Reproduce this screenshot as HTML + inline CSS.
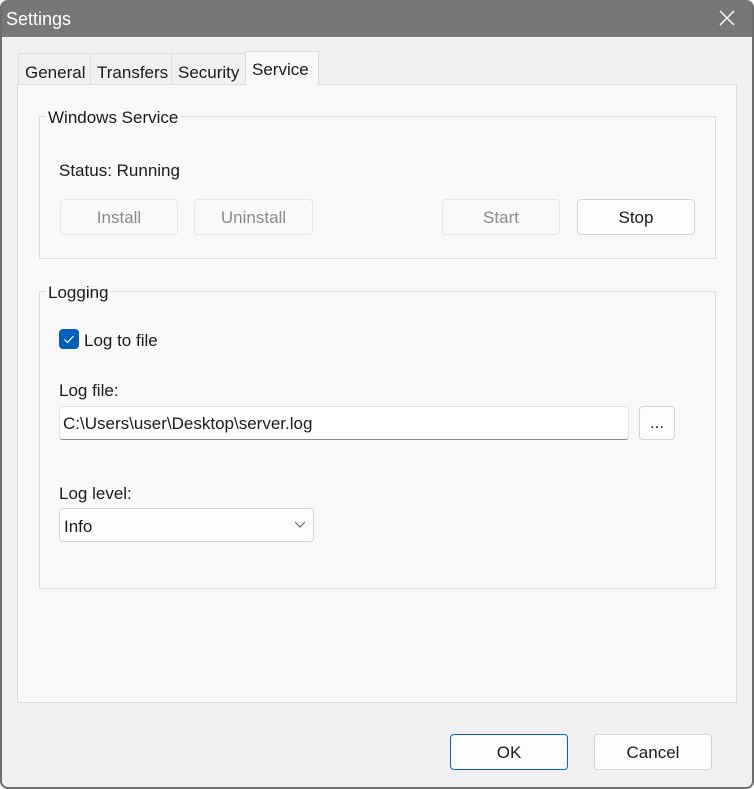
<!DOCTYPE html>
<html><head><style>
*{box-sizing:border-box;margin:0;padding:0}
body{width:754px;height:789px;background:#fff;font-family:"Liberation Sans",sans-serif;font-size:17px;color:#1a1a1a;position:relative;overflow:hidden}
.win{position:absolute;left:0;top:0;width:754px;height:789px;background:#f0f0f0;border-radius:8px;overflow:hidden}
.frame{position:absolute;left:0;top:0;width:754px;height:789px;border:2px solid #6e6e6e;border-top:none;border-radius:8px;z-index:5}
.title{position:absolute;left:0;top:0;width:754px;height:37px;background:#777;color:#fff;font-size:18px}
.a{position:absolute}
.tab{position:absolute;top:53px;height:32px;background:#f0f0f0;border:1px solid #dcdcdc;border-bottom:none;padding:9px 0 0 6px;font-size:17px}
.page{position:absolute;left:17px;top:84px;width:720px;height:619px;background:#f9f9f9;border:1px solid #dcdcdc}
.grp{position:absolute;border:1px solid #dcdcdc}
.lbl{position:absolute;background:#f9f9f9;padding:0 2px}
.btn{position:absolute;height:36px;border:1px solid #d3d3d3;border-radius:4px;background:#fdfdfd;text-align:center;line-height:36px}
.dis{color:#8a8a8a;border-color:#e6e6e6;background:#f9f9f9}
</style></head><body>
<div class="win">
<div class="title"><span class="a" style="left:6px;top:9px">Settings</span>
<svg class="a" style="left:719px;top:10px" width="16" height="16"><path d="M1 1L15 15M15 1L1 15" stroke="#fff" stroke-width="1.4"/></svg></div>
<div class="tab" style="left:18px;width:73px">General</div>
<div class="tab" style="left:90px;width:82px">Transfers</div>
<div class="tab" style="left:171px;width:75px">Security</div>
<div class="page"></div>
<div class="tab" style="left:245px;top:51px;width:74px;height:35px;background:#f9f9f9;padding-top:8px;z-index:2">Service</div>

<div class="grp" style="left:39px;top:116px;width:677px;height:143px"></div>
<div class="lbl" style="left:46px;top:108px">Windows Service</div>
<div class="a" style="left:59px;top:161px">Status: Running</div>
<div class="btn dis" style="left:60px;top:199px;width:118px">Install</div>
<div class="btn dis" style="left:194px;top:199px;width:119px">Uninstall</div>
<div class="btn dis" style="left:442px;top:199px;width:118px">Start</div>
<div class="btn" style="left:577px;top:199px;width:118px">Stop</div>

<div class="grp" style="left:39px;top:291px;width:677px;height:298px"></div>
<div class="lbl" style="left:46px;top:283px">Logging</div>
<div class="a" style="left:59px;top:329px;width:20px;height:20px;background:#005fb8;border-radius:4px">
<svg width="20" height="20"><path d="M5.5 10.5L8.5 13.5L14.5 7" stroke="#fff" stroke-width="1.2" fill="none"/></svg></div>
<div class="a" style="left:84px;top:331px">Log to file</div>
<div class="a" style="left:59px;top:381px">Log file:</div>
<div class="a" style="left:59px;top:406px;width:570px;height:34px;background:#fff;border:1px solid #e3e3e3;border-bottom:1px solid #8a8a8a;border-radius:3px;padding:7px 0 0 3px">C:\Users\user\Desktop\server.log</div>
<div class="btn" style="left:639px;top:406px;width:36px;height:34px;line-height:32px">...</div>
<div class="a" style="left:59px;top:484px">Log level:</div>
<div class="a" style="left:59px;top:508px;width:255px;height:34px;background:#fdfdfd;border:1px solid #d3d3d3;border-radius:4px;padding:8px 0 0 4px">Info
<svg class="a" style="left:234px;top:12px" width="12" height="8"><path d="M1 1L6 6L11 1" stroke="#555" fill="none"/></svg></div>

<div class="btn" style="left:450px;top:734px;width:118px;border-color:#0067c0">OK</div>
<div class="btn" style="left:594px;top:734px;width:118px">Cancel</div>
</div>
<div class="frame"></div>
</body></html>
